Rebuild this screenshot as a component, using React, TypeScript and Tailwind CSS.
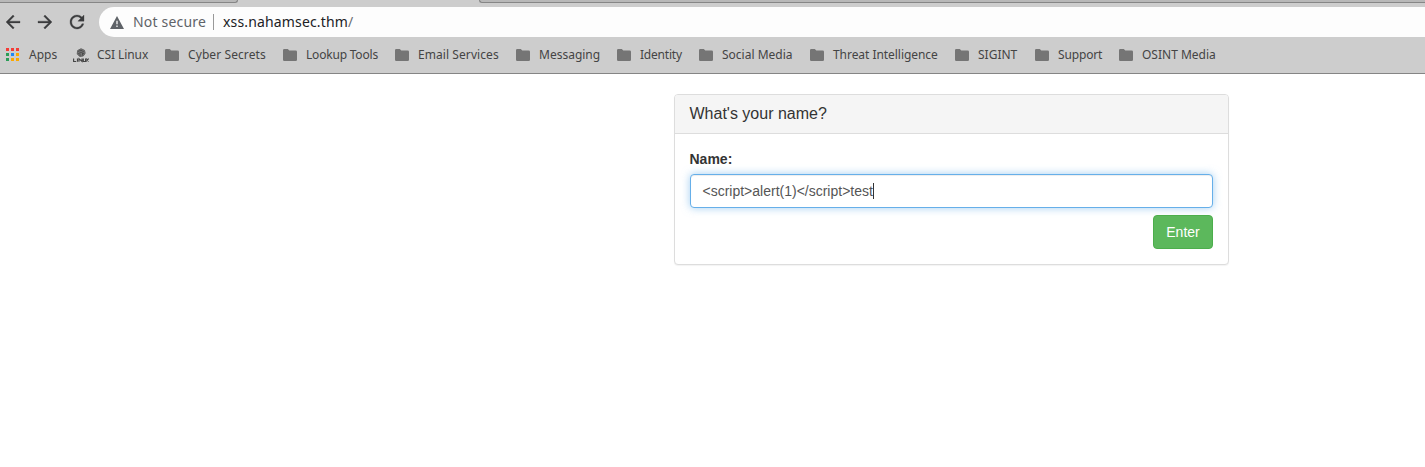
import React from "react";

const bookmarks = [
  { label: "Cyber Secrets", width: "w-[118px]", tracking: "tracking-[0.09px]" },
  { label: "Lookup Tools", width: "w-[112px]", tracking: "tracking-[-0.2px]" },
  { label: "Email Services", width: "w-[121px]", tracking: "tracking-[0.07px]" },
  { label: "Messaging", width: "w-[101px]", tracking: "tracking-normal" },
  { label: "Identity", width: "w-[82px]", tracking: "tracking-[-0.2px]" },
  { label: "Social Media", width: "w-[111px]", tracking: "tracking-normal" },
  { label: "Threat Intelligence", width: "w-[145px]", tracking: "tracking-[-0.05px]" },
  { label: "SIGINT", width: "w-[80px]", tracking: "tracking-normal" },
  { label: "Support", width: "w-[84px]", tracking: "tracking-[-0.15px]" },
  { label: "OSINT Media", width: "w-[110px]", tracking: "tracking-normal" },
];

const appDots = [
  "#f43b36", "#f43b36", "#f43b36",
  "#2a9d57", "#1e88f5", "#fca800",
  "#2a9d57", "#fca800", "#fca800",
];

function NavIcon({ d, className = "" }: { d: string; className?: string }) {
  return (
    <svg viewBox="4 4 16 16" className={`h-3.5 w-3.5 shrink-0 overflow-visible fill-[#3a3b3d] stroke-[#3a3b3d] stroke-[0.35] ${className}`}>
      <path d={d} />
    </svg>
  );
}

function Folder() {
  return (
    <svg viewBox="0 0 14 12" className="mr-[9px] h-3 w-3.5 shrink-0 fill-[#757575]">
      <path d="M1.3 0H4.8L6.3 1.5H12.7Q14 1.5 14 2.8V10.7Q14 12 12.7 12H1.3Q0 12 0 10.7V1.3Q0 0 1.3 0Z" />
    </svg>
  );
}

function CsiIcon() {
  return (
    <svg viewBox="0 0 16 15" className="mr-2 h-[15px] w-4 shrink-0" fill="none" stroke="#444">
      <path d="M8 .7 11.5 2.3 12.2 5.2 10.3 8 6.8 8.5 4.2 6.1 4.6 2.5Z" fill="#777" stroke="#555" strokeWidth=".8" />
      <path d="M5 3.5 8 2.2 11 4M5 6l3-2 3.2 2M7 8V5.5M9.5 7.5V5" strokeWidth=".8" />
      <path d="M.6 10.5v3h2.6M4.5 10.5v3.2M6 13.7v-3l3 2.8v-3M10.3 10.5v3h2.3v-3M13.3 10.5l2.3 3M15.6 10.5l-2.3 3" strokeWidth="1.15" />
    </svg>
  );
}

function Browser() {
  return (
    <header className="h-[74px] border-b border-[#858585] bg-[#cdcdcd] font-['Noto_Sans',sans-serif]">
      <div className="flex h-[3px] justify-between overflow-hidden">
        <div className="h-[3px] w-[238px] rounded-br-[4px] border-r border-b border-[#868686] bg-[#b8b8b8]" />
        <div className="h-[3px] w-[946px] rounded-bl-[4px] border-b border-l border-[#868686] bg-[#b8b8b8]" />
      </div>
      <div className="flex h-[38px] items-center pl-1.5">
        <NavIcon d="M20 11H7.83l5.59-5.59L12 4l-8 8 8 8 1.41-1.41L7.83 13H20v-2z" />
        <NavIcon className="ml-[18px]" d="M12 4l-1.41 1.41L16.17 11H4v2h12.17l-5.58 5.59L12 20l8-8z" />
        <NavIcon className="ml-[18px]" d="M17.65 6.35C16.2 4.9 14.21 4 12 4c-4.42 0-7.99 3.58-7.99 8s3.57 8 7.99 8c3.73 0 6.84-2.55 7.73-6h-2.08c-.82 2.33-3.04 4-5.65 4-3.31 0-6-2.69-6-6s2.69-6 6-6c1.66 0 3.14.69 4.22 1.78L13 11h7V4l-2.35 2.35z" />
        <div className="ml-[15px] flex h-[30px] flex-1 items-center rounded-l-full bg-[#fdfdfd] pl-[11px] text-sm leading-[20px]">
          <svg viewBox="1 2 22 19" preserveAspectRatio="none" className="h-[13px] w-3.5 shrink-0 fill-[#5f6368]">
            <path d="M1 21h22L12 2 1 21zm12-3h-2v-2h2v2zm0-4h-2V9h2v5z" />
          </svg>
          <span className="ml-[9px] w-[80px] tracking-[0.18px] whitespace-nowrap text-[#5f6368]">Not secure</span>
          <span className="mr-[9px] h-4 w-px bg-[#999]" />
          <span className="tracking-[0.15px] text-[#202124]">xss.nahamsec.thm<span className="text-[#6b6e72]">/</span></span>
        </div>
      </div>
      <nav className="flex h-7 items-center pl-1.5 text-[12px] leading-4 whitespace-nowrap text-[#444]">
        <div className="flex w-[67px] items-center">
          <div className="mr-[10px] mb-px grid grid-cols-[3px_3px_3px] gap-[2px]">
            {appDots.map((color, i) => (
              <span key={i} className="h-[3px] w-[3px]" style={{ backgroundColor: color }} />
            ))}
          </div>
          Apps
        </div>
        <div className="flex w-[92px] items-center tracking-[-0.08px]"><CsiIcon />CSI Linux</div>
        {bookmarks.map(({ label, width, tracking }) => (
          <div key={label} className={`flex shrink-0 items-center ${width} ${tracking}`}><Folder />{label}</div>
        ))}
      </nav>
    </header>
  );
}

export default function App() {
  return (
    <div className="h-[467px] overflow-hidden bg-white">
      <Browser />
      <main className="pt-5 pl-[674px] font-['Liberation_Sans',Arial,sans-serif] text-sm leading-5 text-[#333]">
        <section className="h-[171px] w-[555px] rounded border border-[#ddd] bg-white shadow-[0_1px_1px_rgba(0,0,0,0.05)]">
          <h1 className="h-[39px] rounded-t-[3px] border-b border-[#ddd] bg-[#f5f5f5] px-[14.5px] pt-[10px] text-base leading-[17.6px]">What's your name?</h1>
          <form className="px-[15px] pt-[15px]" onSubmit={(e) => e.preventDefault()}>
            <label className="-ml-[0.5px] block pb-[5px] font-bold">Name:</label>
            <div className="flex h-[34px] items-center rounded border border-[#66afe9] bg-white pr-3 pl-[11.5px] text-[#555] shadow-[inset_0_1px_1px_rgba(0,0,0,0.075),0_0_8px_rgba(102,175,233,0.6)]">
              <span>&lt;script&gt;alert(1)&lt;/script&gt;test</span>
              <span className="h-4 w-px bg-[#333]" />
            </div>
            <div className="mt-[7px] flex justify-end">
              <button className="h-[34px] w-[60px] rounded border border-[#4cae4c] bg-[#5cb85c] text-white">Enter</button>
            </div>
          </form>
        </section>
      </main>
    </div>
  );
}
